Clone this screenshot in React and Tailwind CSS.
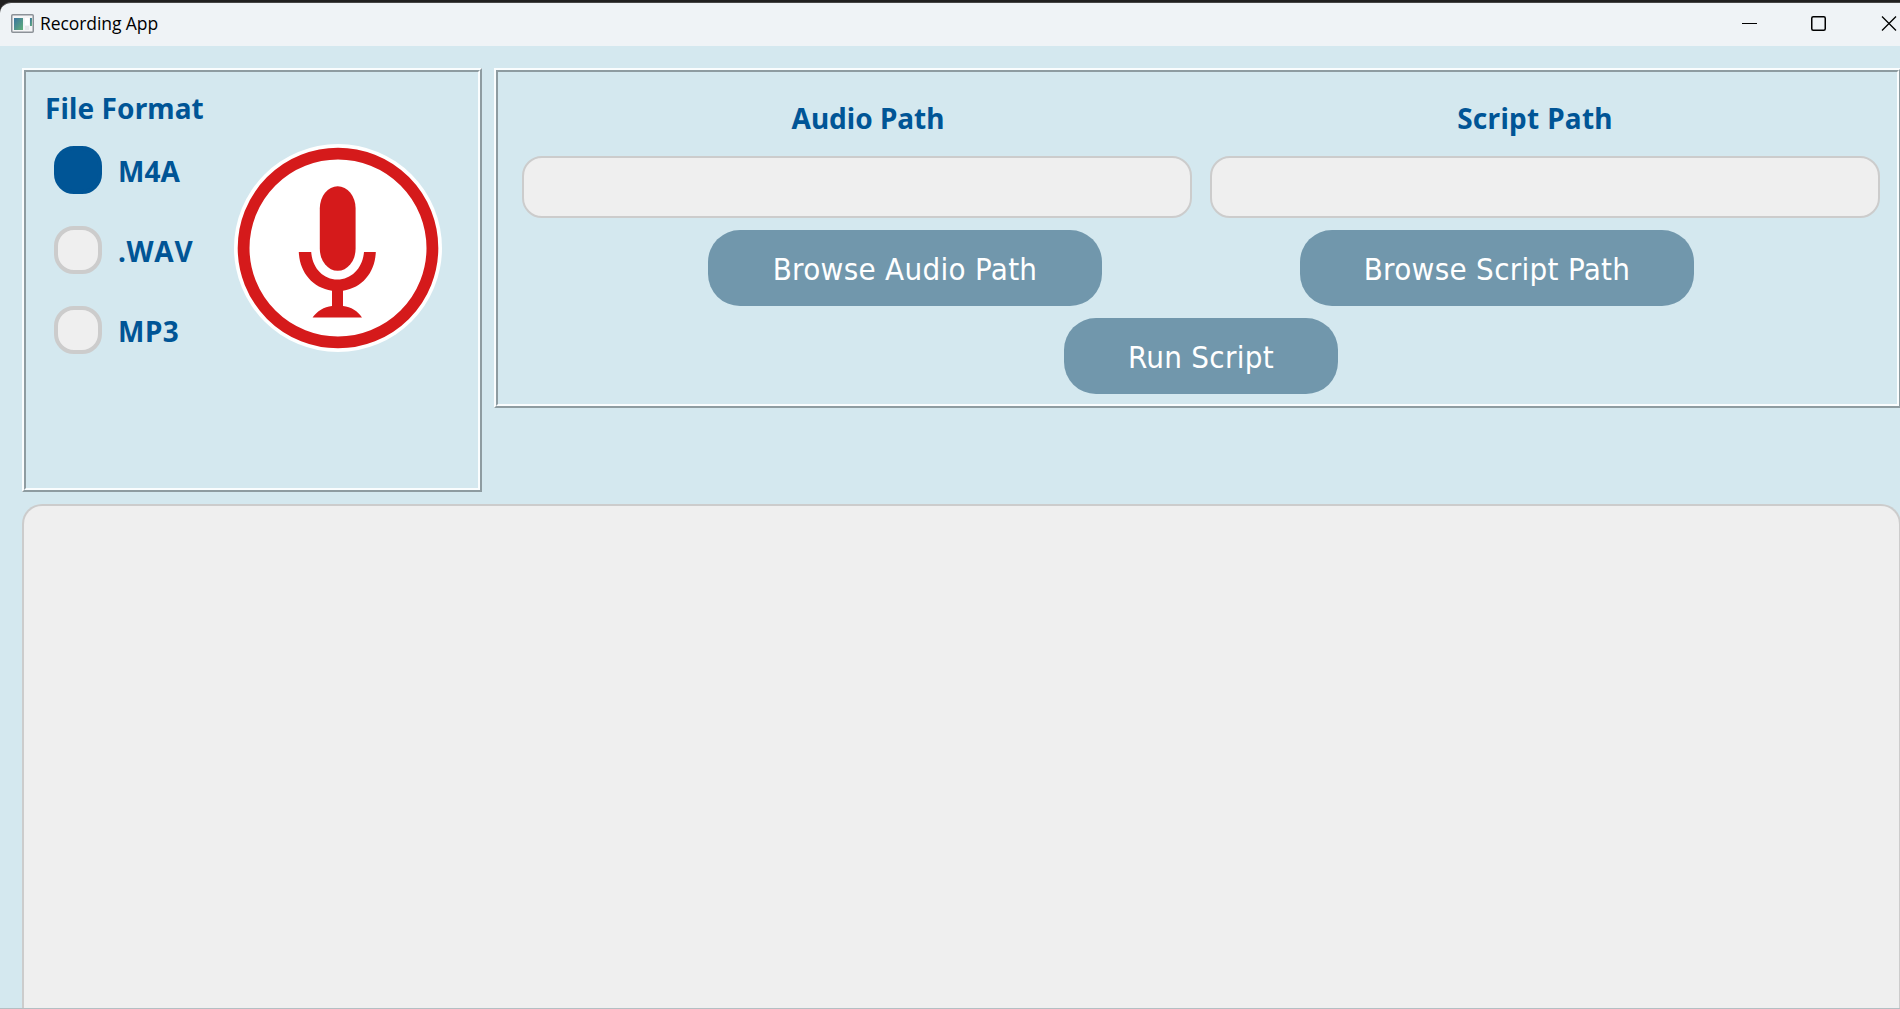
import React from "react";

function Panel({ className, children }) {
  return (
    <section className={`border-2 border-t-[#fafdfe] border-l-[#fafdfe] border-r-[#8e9ca1] border-b-[#8e9ca1] ${className}`}>
      <div className="h-full border-2 border-t-[#8e9ca1] border-l-[#8e9ca1] border-r-[#fafdfe] border-b-[#fafdfe]">
        {children}
      </div>
    </section>
  );
}

const headingFont = "font-['Noto_Sans',sans-serif] text-[28px] leading-[30px] font-bold text-[#005596]";
const buttonFont = "font-['DejaVu_Sans_Condensed','DejaVu_Sans',sans-serif] [font-stretch:condensed]";

function Radio({ label, checked, spacing = "" }) {
  return (
    <label className="flex h-12 items-center gap-4">
      <span
        className={`size-12 rounded-[20px] border-4 ${checked ? "border-[#005596] bg-[#005596]" : "border-[#cccccc] bg-[#efefef]"}`}
      />
      <span className={`pt-px ${headingFont} ${spacing}`}>{label}</span>
    </label>
  );
}

function PushButton({ className, children }) {
  return (
    <button
      className={`flex h-[76px] shrink-0 items-center justify-center rounded-[32px] bg-[#7197ac] pt-[2px] text-[31px] leading-9 tracking-[0.3px] whitespace-nowrap text-white ${buttonFont} ${className}`}
    >
      {children}
    </button>
  );
}

function PathField({ label, inset }) {
  return (
    <div className="flex w-[670px] flex-col">
      <div className={`h-10 text-center whitespace-nowrap ${headingFont} ${inset}`}>{label}</div>
      <div className="mt-[14px] h-[62px] rounded-[20px] border-2 border-[#cccccc] bg-[#efefef]" />
    </div>
  );
}

function Microphone() {
  return (
    <svg width="208" height="208" viewBox="0 0 208 208">
      <circle cx="104" cy="104" r="104" fill="#fff" />
      <circle cx="104" cy="104" r="94.4" fill="none" stroke="#d51a1b" strokeWidth="11.8" />
      <rect x="85.8" y="42.3" width="35.8" height="84.5" rx="17.9" ry="22" fill="#d51a1b" />
      <path
        d="M64.8 108H77.2C78.4 124 89 135.5 103.4 135.5S128.6 124 130 108H141.8C141 128 129 143.5 109 146.8V162C117 163 124 167 128 173.6H78.6C83 167 90 163 98 162V146.8C78 143.5 65.6 128 64.8 108Z"
        fill="#d51a1b"
      />
    </svg>
  );
}

function AppIcon() {
  return (
    <svg width="24" height="20" viewBox="0 0 24 20" className="mt-px">
      <defs>
        <linearGradient id="pane" x1="0" y1="0" x2="1" y2="1">
          <stop offset="0" stopColor="#3a74a0" />
          <stop offset="1" stopColor="#63b079" />
        </linearGradient>
      </defs>
      <rect x="0.75" y="0.75" width="21.5" height="17.5" rx="1" fill="#f4f5f6" stroke="#8c9298" strokeWidth="1.5" />
      <rect x="3" y="4" width="9" height="12" fill="url(#pane)" />
      <rect x="14" y="4" width="4" height="7" fill="#fff" />
      <rect x="14" y="12" width="4" height="4" fill="#e6e8ea" />
      <rect x="19" y="4" width="2" height="8" fill="url(#pane)" />
    </svg>
  );
}

function TitleBar() {
  return (
    <header className="h-[46px] shrink-0 border-t-2 border-[#202020] bg-[#202020]">
      <div className="flex h-11 items-center justify-between rounded-tl-[11px] border-t border-[#464646] bg-[#eff3f6] pb-[3px]">
        <div className="flex items-center gap-[5px] pl-[11px]">
          <AppIcon />
          <span className="font-['Open_Sans','Noto_Sans',sans-serif] text-[17.5px] leading-6 tracking-[-0.08px] text-black">
            Recording App
          </span>
        </div>
        <svg width="160" height="18" viewBox="0 0 160 18" fill="none" stroke="#000">
          <path d="M2 9.5H17" />
          <rect x="71.75" y="2.75" width="13.5" height="13.5" rx="1.5" strokeWidth="1.5" />
          <path d="M142 2.5 156 16.5M156 2.5 142 16.5" strokeWidth="1.3" />
        </svg>
      </div>
    </header>
  );
}

export default function App() {
  return (
    <div className="flex h-[1009px] w-[1900px] flex-col overflow-hidden border-b border-[#b4bfc3] bg-[#d4e8ef]">
      <TitleBar />
      <main className="flex w-[1901px] grow flex-col pt-[22px] pl-[22px]">
        <div className="flex items-start gap-3">
          <Panel className="h-[424px] w-[460px]">
            <div className="flex pl-[18px]">
              <div className="w-[190px] pt-5">
                <h2 className={`h-[54px] pt-px pl-px tracking-[0.1px] whitespace-nowrap ${headingFont}`}>File Format</h2>
                <div className="flex flex-col gap-8 pl-[10px]">
                  <Radio label="M4A" checked />
                  <Radio label=".WAV" spacing="[font-kerning:none] tracking-[0.7px]" />
                  <Radio label="MP3" spacing="tracking-[0.5px]" />
                </div>
              </div>
              <div className="pt-[72px]">
                <Microphone />
              </div>
            </div>
          </Panel>
          <Panel className="h-[340px] w-[1407px]">
            <div className="flex flex-col items-center gap-3 pt-[30px]">
              <div className="flex w-full gap-[18px] pl-6">
                <PathField label="Audio Path" inset="pl-[22px] pt-px" />
                <PathField label="Script Path" inset="pr-[20px] pt-px tracking-[0.3px]" />
              </div>
              <div className="flex w-full gap-[198px] pl-[210px]">
                <PushButton className="w-[394px]">Browse Audio Path</PushButton>
                <PushButton className="w-[394px]">Browse Script Path</PushButton>
              </div>
              <div className="flex w-full pl-[566px]">
                <PushButton className="w-[274px]">Run Script</PushButton>
              </div>
            </div>
          </Panel>
        </div>
        <div className="mt-3 grow rounded-t-[20px] border-2 border-b-0 border-[#cccccc] bg-[#efefef]" />
      </main>
    </div>
  );
}
